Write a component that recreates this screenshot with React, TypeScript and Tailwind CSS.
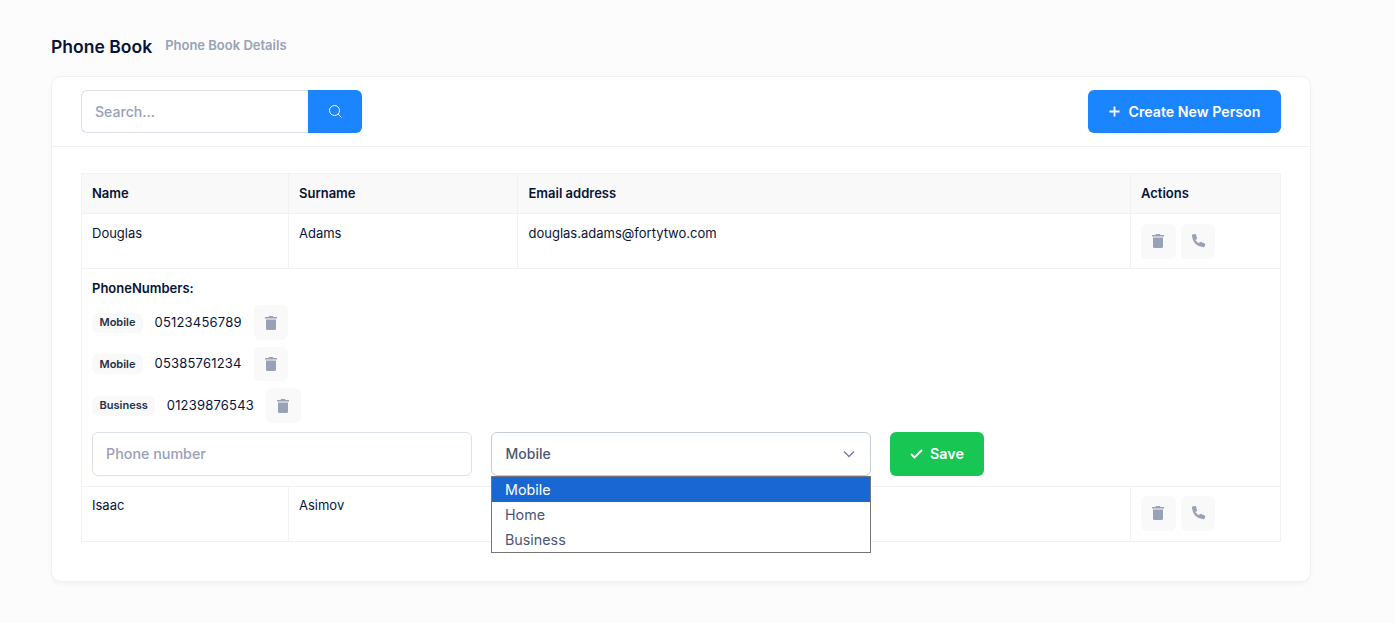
import React from "react";

const TrashIcon = () => (
  <svg width="16" height="16" viewBox="0 0 16 16" fill="#99A1B7">
    <path d="M6 1h4l.4 1H14v1.400H2V2h3.600z" />
    <path d="M3 4.600h10v9.200c0 .7-.5 1.200-1.200 1.200H4.200C3.500 15 3 14.500 3 13.800z" />
  </svg>
);

const PhoneIcon = () => (
  <svg width="16" height="16" viewBox="0 0 16 16" fill="none" stroke="#99A1B7" strokeLinecap="round">
    <path d="M3.300 3.500C3.600 8.500 7.500 12.500 12.800 12.900" strokeWidth="2.400" />
    <path d="M3.300 2.700 4.800 2.500 5.600 5.300" strokeWidth="2.800" />
    <path d="M13.400 12.800 13.700 11.600 10.500 10.300" strokeWidth="2.800" />
  </svg>
);

const IconBtn = ({ children }: { children: React.ReactNode }) => (
  <button className="w-[34.670px] h-[34.670px] rounded-[6px] bg-[#f9f9f9] flex items-center justify-center shrink-0">
    {children}
  </button>
);

const Actions = () => (
  <div className="flex gap-[5px]">
    <IconBtn><TrashIcon /></IconBtn>
    <IconBtn><PhoneIcon /></IconBtn>
  </div>
);

const PhoneRow = ({ type, num }: { type: string; num: string }) => (
  <div className="flex items-center h-[35px] mb-[6.500px]">
    <span className="h-[20px] px-[7.500px] rounded-[6px] bg-[#f9f9f9] text-[11px] font-semibold text-[#252f4a] flex items-center">
      {type}
    </span>
    <span className="ml-[11.500px] text-[13px] text-[#071437] tracking-[0.2px]">{num}</span>
    <span className="ml-[12px]"><IconBtn><TrashIcon /></IconBtn></span>
  </div>
);

const th = "h-[40px] pl-[10px] pr-[10px] text-left align-middle text-[13px] font-semibold text-[#071437] border border-[#f1f1f4] bg-[#f9f9f9]";
const thEmail = "h-[40px] pl-[10.500px] pr-[10px] text-left align-middle text-[13px] font-semibold text-[#071437] border border-[#f1f1f4] bg-[#f9f9f9]";
const td = "pl-[10px] pr-[10px] pt-[10px] pb-[9px] align-top text-[13px] text-[#071437] border border-[#f1f1f4] h-[55px]";
const tdEmail = "pl-[10.500px] pr-[10px] pt-[10px] pb-[9px] align-top text-[13px] text-[#071437] border border-[#f1f1f4] h-[55px]";
const tdLast = "pl-[10px] pr-[10px] pt-[9px] pb-[10px] align-top text-[13px] text-[#071437] border border-[#f1f1f4] h-[55px]";

export default function App() {
  return (
    <div
      className="min-h-[623px] bg-[#fcfcfc] pt-[36px] pl-[51px] pr-[84px]"
      style={{ fontFamily: "Inter, sans-serif" }}
    >
      <div className="flex items-center h-[20px] mb-[20px] relative top-[1px]">
        <h1 className="text-[17.550px] font-semibold text-[#071437] leading-none">Phone Book</h1>
        <span className="ml-[13px] text-[13px] font-semibold text-[#99a1b7] relative -top-[1px]">Phone Book Details</span>
      </div>

      <div className="bg-white border border-[#f1f1f4] rounded-[10px] shadow-[0_3px_4px_rgba(0,0,0,0.03)] h-[506px]">
        <div className="h-[70px] border-b border-[#f1f1f4] px-[29px] flex items-center justify-between">
          <div className="flex">
            <input
              placeholder="Search..."
              className="w-[227px] h-[43px] pl-[13px] border border-[#dbdfe9] border-r-0 rounded-l-[6px] text-[14.100px] font-medium outline-none placeholder:text-[#99a1b7] bg-white"
            />
            <button className="w-[54px] h-[43px] bg-[#1b84ff] rounded-r-[6px] flex items-center justify-center">
              <svg width="15" height="15" viewBox="0 0 15 15" fill="none" stroke="white" strokeWidth="1">
                <circle cx="6.500" cy="6.500" r="5" />
                <path d="M10.200 10.200 13.500 13.500" />
              </svg>
            </button>
          </div>
          <button className="w-[193px] h-[43px] bg-[#1b84ff] rounded-[6px] flex items-center justify-center text-white text-[14.200px] font-semibold">
            <svg width="11" height="11" viewBox="0 0 12 12" stroke="white" strokeWidth="2" className="mr-[9px]">
              <path d="M6 .5v11M.5 6h11" />
            </svg>
            Create New Person
          </button>
        </div>

        <div className="px-[29px] pt-[26px]">
          <div className="relative">
            <table className="w-[1199px] table-fixed border-collapse">
              <colgroup>
                <col className="w-[207px]" />
                <col className="w-[229px]" />
                <col className="w-[613px]" />
                <col className="w-[150px]" />
              </colgroup>
              <thead>
                <tr>
                  <th className={th}>Name</th>
                  <th className={th}>Surname</th>
                  <th className={thEmail}>Email address</th>
                  <th className={th}>Actions</th>
                </tr>
              </thead>
              <tbody>
                <tr>
                  <td className={td}>Douglas</td>
                  <td className={td}>Adams</td>
                  <td className={tdEmail}>douglas.adams@fortytwo.com</td>
                  <td className={td}><Actions /></td>
                </tr>
                <tr>
                  <td colSpan={4} className="h-[218px] pl-[10px] pt-[11px] align-top border border-[#f1f1f4]">
                    <div className="text-[13px] font-semibold text-[#071437] leading-[16px] mb-[9px]">PhoneNumbers:</div>
                    <PhoneRow type="Mobile" num="05123456789" />
                    <PhoneRow type="Mobile" num="05385761234" />
                    <PhoneRow type="Business" num="01239876543" />
                    <div className="flex items-start mt-[9px]">
                      <input
                        placeholder="Phone number"
                        className="w-[380px] h-[44px] pl-[13px] pb-[1px] border border-[#dbdfe9] rounded-[6px] text-[14.300px] font-medium outline-none placeholder:text-[#99a1b7]"
                      />
                      <div className="relative ml-[19px] w-[380px]">
                        <div className="h-[44px] pl-[13.500px] pr-[15px] pb-[1px] border border-[#c4cada] rounded-[6px] flex items-center justify-between text-[14px] font-medium text-[#4b5675]">
                          Mobile
                          <svg width="12" height="8" viewBox="0 0 12 8" fill="none" stroke="#78829d" strokeWidth="1.500">
                            <path d="M1 1.500 6 6.500 11 1.500" />
                          </svg>
                        </div>
                        <ul className="absolute left-0 top-[44px] w-[380px] h-[77px] border border-[#767676] bg-white text-[14.300px] text-[#4b5675] z-10">
                          <li className="h-[25px] pl-[13px] pt-[1px] flex items-center bg-[#1967d2] text-white">Mobile</li>
                          <li className="h-[25px] pl-[13px] pt-[1px] flex items-center">Home</li>
                          <li className="h-[25px] pl-[13px] pt-[1px] flex items-center">Business</li>
                        </ul>
                      </div>
                      <button className="ml-[19px] w-[94px] h-[44px] bg-[#17c653] rounded-[6px] flex items-center justify-center text-white text-[14.300px] font-semibold">
                        <svg width="13" height="10" viewBox="0 0 13 10" fill="none" stroke="white" strokeWidth="1.800" className="mr-[7px]">
                          <path d="M1 5 4.500 8.500 12 1" />
                        </svg>
                        Save
                      </button>
                    </div>
                  </td>
                </tr>
                <tr>
                  <td className={tdLast}>Isaac</td>
                  <td className={tdLast}>Asimov</td>
                  <td className={tdLast}></td>
                  <td className={tdLast}><Actions /></td>
                </tr>
              </tbody>
            </table>
          </div>
        </div>
      </div>
    </div>
  );
}
